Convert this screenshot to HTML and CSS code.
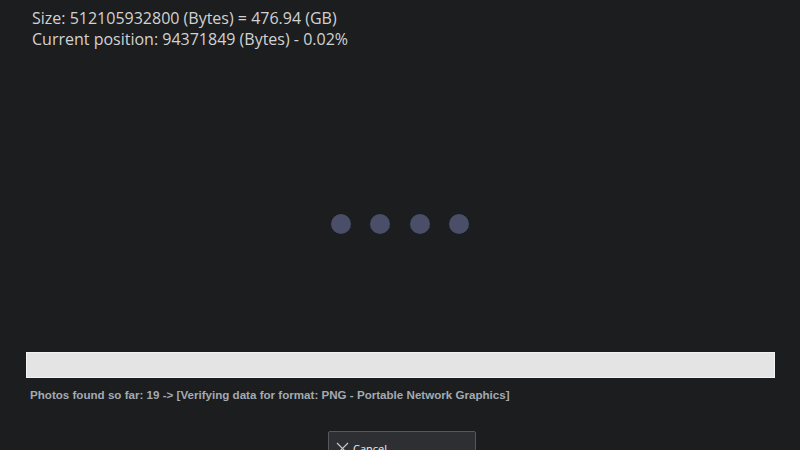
FILE: index.html
```html
<!DOCTYPE html>
<html>
<head>
<meta charset="utf-8">
<link rel="stylesheet" href="styles.css">
</head>
<body>
<div class="page">
  <div class="info">
    <div class="line">Size: 512105932800 (Bytes) = 476.94 (GB)</div>
    <div class="line">Current position: 94371849 (Bytes) - 0.02%</div>
  </div>
  <div class="spinner">
    <span class="dot"></span><span class="dot"></span><span class="dot"></span><span class="dot"></span>
  </div>
  <div class="bar"></div>
  <div class="status">Photos found so far: 19 -&gt; [Verifying data for format: PNG - Portable Network Graphics]</div>
  <div class="actions">
    <button class="btn">
      <svg class="ico" width="13" height="13" viewBox="0 0 13 13"><path d="M1 1 L12 12 M12 1 L1 12" stroke="#c8c8c8" stroke-width="1.2" fill="none"/></svg>
      <span>Cancel</span>
    </button>
  </div>
</div>
</body>
</html>
```
FILE: styles.css
```css
html, body {
  margin: 0;
  padding: 0;
  background: #1c1d1f;
  overflow: hidden;
}
.page {
  width: 800px;
  height: 450px;
  display: flex;
  flex-direction: column;
}
.page > * { flex-shrink: 0; }
.info {
  padding: 8px 0 0 32px;
  font-family: "Open Sans", "Noto Sans", sans-serif;
  font-size: 16px;
  line-height: 21px;
  color: #d2d2d2;
}
.spinner {
  height: 302px;
  box-sizing: border-box;
  padding-top: 164px;
  display: flex;
  justify-content: center;
  gap: 19.5px;
}
.dot {
  width: 20px;
  height: 20px;
  border-radius: 50%;
  background: #4a4e68;
}
.bar {
  margin: 0 25px 0 26px;
  height: 26px;
  box-sizing: border-box;
  background: #e4e4e4;
  border: 1px solid #f2f2f2;
}
.status {
  margin: 9px 0 0 30px;
  font-family: "Liberation Sans", Arial, sans-serif;
  font-weight: bold;
  font-size: 11.6px;
  line-height: 15px;
  color: #a3aab2;
}
.actions {
  margin-top: 29px;
  padding-left: 328px;
}
.btn {
  width: 148px;
  height: 32px;
  box-sizing: border-box;
  background: #2e2f33;
  border: 1px solid #56585d;
  border-radius: 2px;
  display: flex;
  align-items: flex-start;
  gap: 4px;
  padding: 10px 0 0 7px;
  font-family: "Open Sans", sans-serif;
  font-size: 11px;
  color: #f0f0f0;
}
.btn span { line-height: 13px; }
.ico { flex: none; }
```
